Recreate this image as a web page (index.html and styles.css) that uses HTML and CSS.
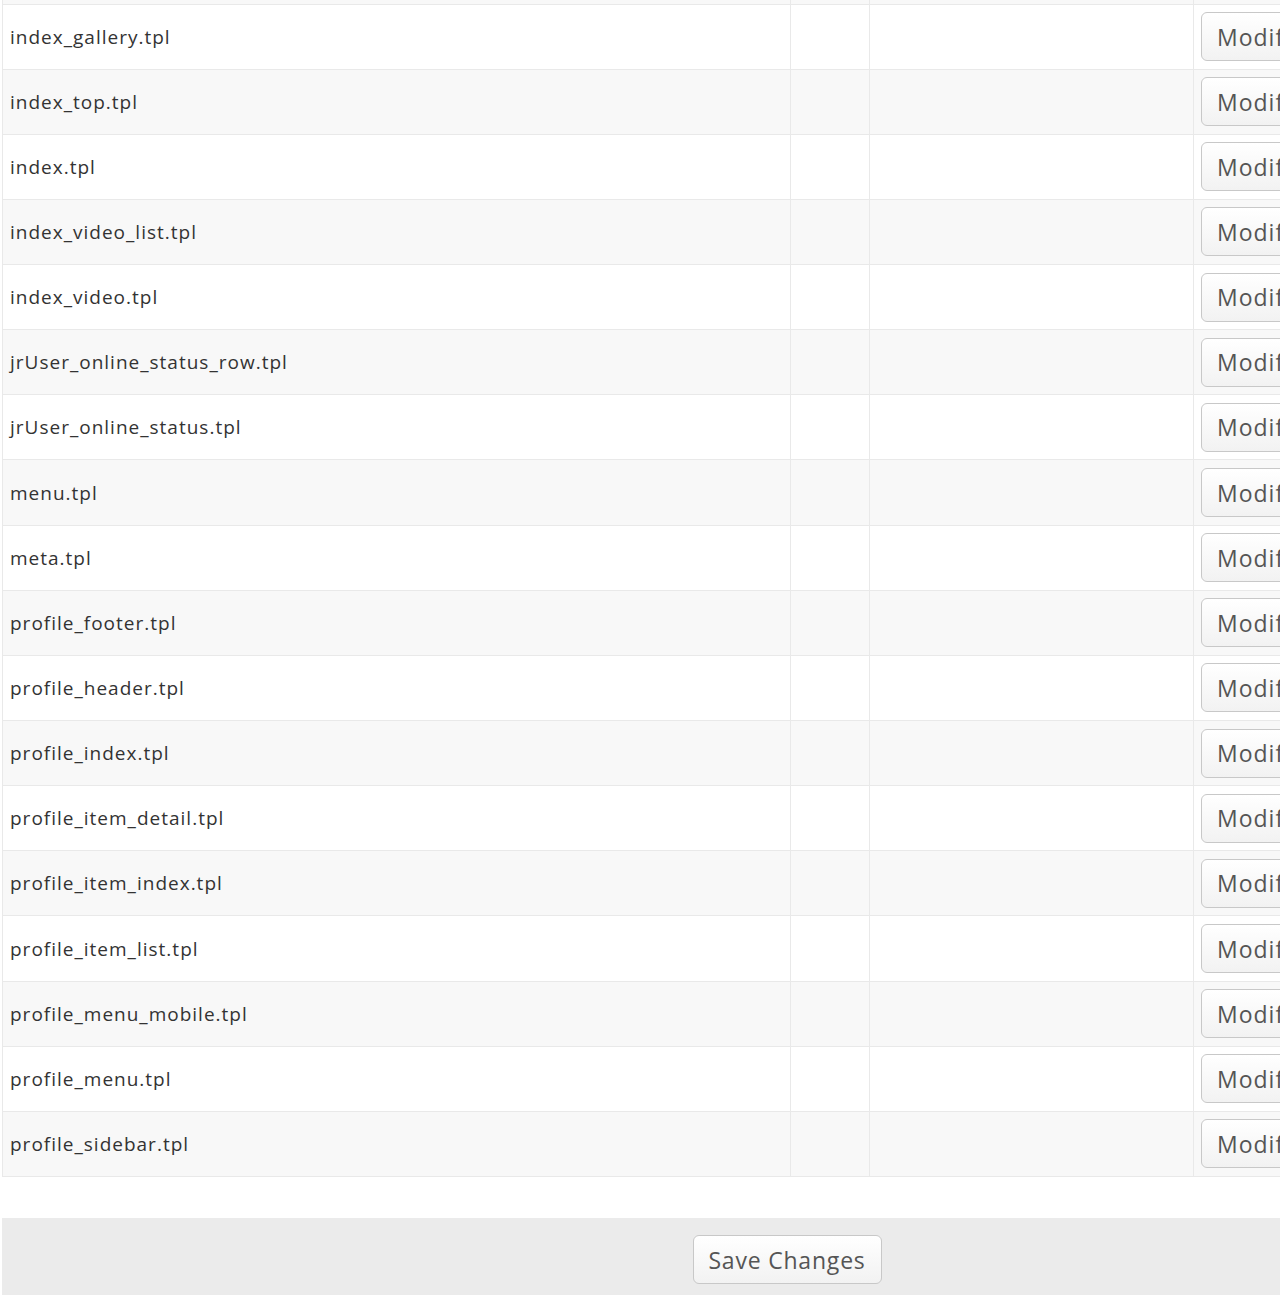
FILE: index.html
```html
<!DOCTYPE html>
<html lang="en">
<head>
  <meta charset="UTF-8" />
  <title>Templates</title>
  <link rel="stylesheet" href="styles.css">
</head>
<body>
  <form class="page_form">
    <table class="page_table">
      <tr class="page_row_cut"><td></td><td></td><td></td><td></td></tr>
      <tr><td class="tpl_name">index_gallery.tpl</td><td></td><td></td><td class="tpl_action"><button type="button" class="form_button">Modify</button></td></tr>
      <tr><td class="tpl_name">index_top.tpl</td><td></td><td></td><td class="tpl_action"><button type="button" class="form_button">Modify</button></td></tr>
      <tr><td class="tpl_name">index.tpl</td><td></td><td></td><td class="tpl_action"><button type="button" class="form_button">Modify</button></td></tr>
      <tr><td class="tpl_name">index_video_list.tpl</td><td></td><td></td><td class="tpl_action"><button type="button" class="form_button">Modify</button></td></tr>
      <tr><td class="tpl_name">index_video.tpl</td><td></td><td></td><td class="tpl_action"><button type="button" class="form_button">Modify</button></td></tr>
      <tr><td class="tpl_name">jrUser_online_status_row.tpl</td><td></td><td></td><td class="tpl_action"><button type="button" class="form_button">Modify</button></td></tr>
      <tr><td class="tpl_name">jrUser_online_status.tpl</td><td></td><td></td><td class="tpl_action"><button type="button" class="form_button">Modify</button></td></tr>
      <tr><td class="tpl_name">menu.tpl</td><td></td><td></td><td class="tpl_action"><button type="button" class="form_button">Modify</button></td></tr>
      <tr><td class="tpl_name">meta.tpl</td><td></td><td></td><td class="tpl_action"><button type="button" class="form_button">Modify</button></td></tr>
      <tr><td class="tpl_name">profile_footer.tpl</td><td></td><td></td><td class="tpl_action"><button type="button" class="form_button">Modify</button></td></tr>
      <tr><td class="tpl_name">profile_header.tpl</td><td></td><td></td><td class="tpl_action"><button type="button" class="form_button">Modify</button></td></tr>
      <tr><td class="tpl_name">profile_index.tpl</td><td></td><td></td><td class="tpl_action"><button type="button" class="form_button">Modify</button></td></tr>
      <tr><td class="tpl_name">profile_item_detail.tpl</td><td></td><td></td><td class="tpl_action"><button type="button" class="form_button">Modify</button></td></tr>
      <tr><td class="tpl_name">profile_item_index.tpl</td><td></td><td></td><td class="tpl_action"><button type="button" class="form_button">Modify</button></td></tr>
      <tr><td class="tpl_name">profile_item_list.tpl</td><td></td><td></td><td class="tpl_action"><button type="button" class="form_button">Modify</button></td></tr>
      <tr><td class="tpl_name">profile_menu_mobile.tpl</td><td></td><td></td><td class="tpl_action"><button type="button" class="form_button">Modify</button></td></tr>
      <tr><td class="tpl_name">profile_menu.tpl</td><td></td><td></td><td class="tpl_action"><button type="button" class="form_button">Modify</button></td></tr>
      <tr><td class="tpl_name">profile_sidebar.tpl</td><td></td><td></td><td class="tpl_action"><button type="button" class="form_button">Modify</button></td></tr>
    </table>
    <div class="form_submit_box">
      <button type="submit" class="form_button save_button">Save Changes</button>
    </div>
  </form>
</body>
</html>
```

FILE: styles.css
```css
html, body {
  margin: 0;
  overflow: hidden;
  background: #fff;
}
body {
  font-family: 'Open Sans', sans-serif;
  color: #333;
}
.page_form {
  width: 1570px;
  margin-left: 2px;
}
.page_table {
  width: 100%;
  border-collapse: collapse;
  table-layout: fixed;
}
.page_table td {
  border: 1px solid #e9e9e9;
  height: 65.15px;
  padding: 0 7px;
  box-sizing: border-box;
}
.page_table td:nth-child(1) { width: 788px; }
.page_table td:nth-child(2) { width: 79px; }
.page_table td:nth-child(3) { width: 324px; }
.page_table tr:nth-child(odd) td {
  background: #f8f8f8;
}
.page_table tr:nth-child(even) td {
  background: #fff;
}
.page_table tr.page_row_cut td {
  height: 4px;
  border-top: none;
  padding: 0;
}
.tpl_name {
  font-size: 19px;
  letter-spacing: 1px;
}
.form_button {
  font-family: inherit;
  font-size: 23px;
  letter-spacing: 1px;
  color: #555;
  height: 49px;
  padding: 0 15px;
  background: linear-gradient(#fff, #f2f2f2);
  border: 1px solid #c8c8c8;
  border-radius: 6px;
  cursor: pointer;
}
.tpl_action .form_button {
  width: 120px;
  text-align: left;
}
.form_submit_box {
  margin-top: 41px;
  background: #ebebeb;
  padding: 17px 0 30px;
  text-align: center;
}
.save_button {
  width: 189px;
  padding: 0;
  font-size: 23px;
  letter-spacing: 0.8px;
}
```
